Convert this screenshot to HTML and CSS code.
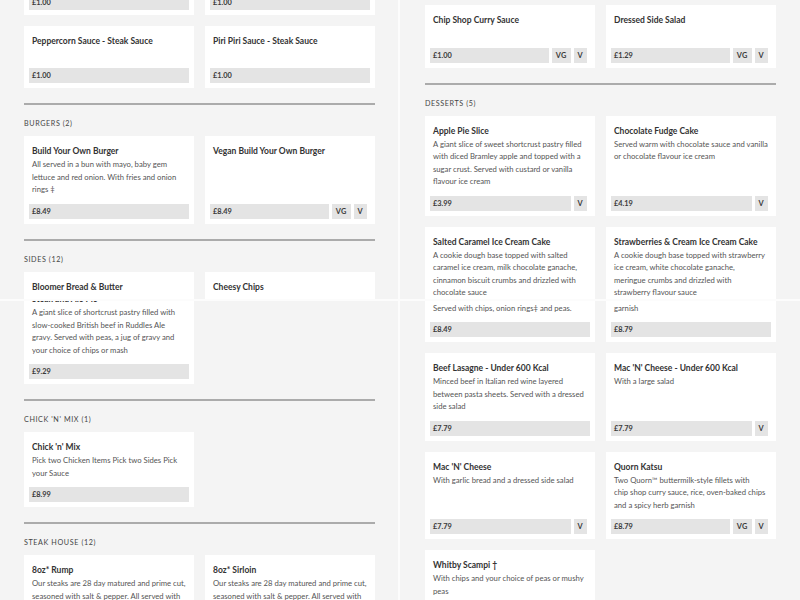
FILE: index.html
```html
<!DOCTYPE html>
<html lang="en">
<head>
<meta charset="UTF-8">
<meta name="viewport" content="width=device-width, initial-scale=1.0">
<title>Menu</title>
<link rel="stylesheet" href="styles.css">
</head>
<body>

<div class="board">

    <!-- top left: end of sauces, burgers, sides -->
    <div class="tile tile-left">
        <div class="cards view-tl">
            <div class="card">
                <h3 class="card-title">Garlic Mayo - Steak Sauce</h3>
                <p class="card-desc"></p>
                <div class="card-foot"><span class="price">£1.00</span></div>
            </div>
            <div class="card">
                <h3 class="card-title">Béarnaise Sauce - Steak Sauce</h3>
                <p class="card-desc"></p>
                <div class="card-foot"><span class="price">£1.00</span></div>
            </div>
        </div>
        <div class="cards row">
            <div class="card">
                <h3 class="card-title">Peppercorn Sauce - Steak Sauce</h3>
                <p class="card-desc"></p>
                <div class="card-foot"><span class="price">£1.00</span></div>
            </div>
            <div class="card">
                <h3 class="card-title">Piri Piri Sauce - Steak Sauce</h3>
                <p class="card-desc"></p>
                <div class="card-foot"><span class="price">£1.00</span></div>
            </div>
        </div>

        <div class="section">
            <h2 class="section-title">Burgers (2)</h2>
            <div class="cards">
                <div class="card">
                    <h3 class="card-title">Build Your Own Burger</h3>
                    <p class="card-desc">All served in a bun with mayo, baby gem<br>lettuce and red onion. With fries and onion<br>rings ‡</p>
                    <div class="card-foot"><span class="price">£8.49</span></div>
                </div>
                <div class="card">
                    <h3 class="card-title">Vegan Build Your Own Burger</h3>
                    <p class="card-desc"></p>
                    <div class="card-foot tagged"><span class="price">£8.49</span><span class="tag">VG</span><span class="tag">V</span></div>
                </div>
            </div>
        </div>

        <div class="section">
            <h2 class="section-title">Sides (12)</h2>
            <div class="cards">
                <div class="card">
                    <h3 class="card-title">Bloomer Bread &amp; Butter</h3>
                    <p class="card-desc"></p>
                    <div class="card-foot"><span class="price">£1.49</span></div>
                </div>
                <div class="card">
                    <h3 class="card-title">Cheesy Chips</h3>
                    <p class="card-desc"></p>
                    <div class="card-foot"><span class="price">£2.99</span></div>
                </div>
            </div>
        </div>
    </div>

    <!-- top right: sides, desserts -->
    <div class="tile tile-right">
        <div class="cards view-tr">
            <div class="card">
                <h3 class="card-title">Chip Shop Curry Sauce</h3>
                <p class="card-desc"></p>
                <div class="card-foot tagged"><span class="price">£1.00</span><span class="tag">VG</span><span class="tag">V</span></div>
            </div>
            <div class="card">
                <h3 class="card-title">Dressed Side Salad</h3>
                <p class="card-desc"></p>
                <div class="card-foot tagged"><span class="price">£1.29</span><span class="tag">VG</span><span class="tag">V</span></div>
            </div>
        </div>

        <div class="section">
            <h2 class="section-title">Desserts (5)</h2>
            <div class="cards">
                <div class="card">
                    <h3 class="card-title">Apple Pie Slice</h3>
                    <p class="card-desc">A giant slice of sweet shortcrust pastry filled<br>with diced Bramley apple and topped with a<br>sugar crust. Served with custard or vanilla<br>flavour ice cream</p>
                    <div class="card-foot tagged"><span class="price">£3.99</span><span class="tag">V</span></div>
                </div>
                <div class="card">
                    <h3 class="card-title">Chocolate Fudge Cake</h3>
                    <p class="card-desc">Served warm with chocolate sauce and vanilla<br>or chocolate flavour ice cream</p>
                    <div class="card-foot tagged"><span class="price">£4.19</span><span class="tag">V</span></div>
                </div>
                <div class="card">
                    <h3 class="card-title">Salted Caramel Ice Cream Cake</h3>
                    <p class="card-desc">A cookie dough base topped with salted<br>caramel ice cream, milk chocolate ganache,<br>cinnamon biscuit crumbs and drizzled with<br>chocolate sauce</p>
                    <div class="card-foot tagged"><span class="price">£4.49</span><span class="tag">V</span></div>
                </div>
                <div class="card">
                    <h3 class="card-title">Strawberries &amp; Cream Ice Cream Cake</h3>
                    <p class="card-desc">A cookie dough base topped with strawberry<br>ice cream, white chocolate ganache,<br>meringue crumbs and drizzled with<br>strawberry flavour sauce</p>
                    <div class="card-foot tagged"><span class="price">£4.49</span><span class="tag">V</span></div>
                </div>
            </div>
        </div>
    </div>

    <!-- bottom left: pies, chick 'n' mix, steak house -->
    <div class="tile tile-left">
        <div class="cards view-bl">
            <div class="card">
                <h3 class="card-title">Steak and Ale Pie</h3>
                <p class="card-desc">A giant slice of shortcrust pastry filled with<br>slow-cooked British beef in Ruddles Ale<br>gravy. Served with peas, a jug of gravy and<br>your choice of chips or mash</p>
                <div class="card-foot"><span class="price">£9.29</span></div>
            </div>
        </div>

        <div class="section">
            <h2 class="section-title">Chick 'n' Mix (1)</h2>
            <div class="cards">
                <div class="card">
                    <h3 class="card-title">Chick 'n' Mix</h3>
                    <p class="card-desc">Pick two Chicken Items Pick two Sides Pick<br>your Sauce</p>
                    <div class="card-foot"><span class="price">£8.99</span></div>
                </div>
            </div>
        </div>

        <div class="section">
            <h2 class="section-title">Steak House (12)</h2>
            <div class="cards">
                <div class="card">
                    <h3 class="card-title">8oz* Rump</h3>
                    <p class="card-desc">Our steaks are 28 day matured and prime cut,<br>seasoned with salt &amp; pepper. All served with<br>chips, peas, grilled tomato and mushroom</p>
                    <div class="card-foot"><span class="price">£12.99</span></div>
                </div>
                <div class="card">
                    <h3 class="card-title">8oz* Sirloin</h3>
                    <p class="card-desc">Our steaks are 28 day matured and prime cut,<br>seasoned with salt &amp; pepper. All served with<br>chips, peas, grilled tomato and mushroom</p>
                    <div class="card-foot"><span class="price">£14.99</span></div>
                </div>
            </div>
        </div>
    </div>

    <!-- bottom right: mains -->
    <div class="tile tile-right">
        <div class="cards view-br">
            <div class="card">
                <h3 class="card-title">Scampi Platter</h3>
                <p class="card-desc">Served with chips, onion rings‡ and peas.</p>
                <div class="card-foot"><span class="price">£8.49</span></div>
            </div>
            <div class="card">
                <h3 class="card-title">Chicken Katsu</h3>
                <p class="card-desc">garnish</p>
                <div class="card-foot"><span class="price">£8.79</span></div>
            </div>
        </div>
        <div class="cards row">
            <div class="card">
                <h3 class="card-title">Beef Lasagne - Under 600 Kcal</h3>
                <p class="card-desc">Minced beef in Italian red wine layered<br>between pasta sheets. Served with a dressed<br>side salad</p>
                <div class="card-foot"><span class="price">£7.79</span></div>
            </div>
            <div class="card">
                <h3 class="card-title">Mac 'N' Cheese - Under 600 Kcal</h3>
                <p class="card-desc">With a large salad</p>
                <div class="card-foot tagged"><span class="price">£7.79</span><span class="tag">V</span></div>
            </div>
            <div class="card">
                <h3 class="card-title">Mac 'N' Cheese</h3>
                <p class="card-desc">With garlic bread and a dressed side salad</p>
                <div class="card-foot tagged"><span class="price">£7.79</span><span class="tag">V</span></div>
            </div>
            <div class="card">
                <h3 class="card-title">Quorn Katsu</h3>
                <p class="card-desc">Two Quorn™ buttermilk-style fillets with<br>chip shop curry sauce, rice, oven-baked chips<br>and a spicy herb garnish</p>
                <div class="card-foot tagged"><span class="price">£8.79</span><span class="tag">VG</span><span class="tag">V</span></div>
            </div>
            <div class="card">
                <h3 class="card-title">Whitby Scampi †</h3>
                <p class="card-desc">With chips and your choice of peas or mushy<br>peas</p>
                <div class="card-foot"><span class="price">£8.99</span></div>
            </div>
        </div>
    </div>

</div>

</body>
</html>
```

FILE: styles.css
```css
body {
    margin: 0;
    padding: 0;
    font-family: Lato, "Open Sans", sans-serif;
    background-color: #fcfcfc;
}
.board {
    width: 800px;
    height: 600px;
    display: grid;
    grid-template-columns: 398px 400px;
    grid-template-rows: 299px 299px;
    gap: 2px;
    background-color: #fcfcfc;
}
.tile {
    background-color: #f4f4f4;
    overflow: hidden;
}
.tile-left {
    padding: 0 23px 0 24px;
}
.tile-right {
    padding: 0 24px 0 25px;
}
.view-tl {
    margin-top: -48px;
}
.view-tr {
    margin-top: 5px;
}
.view-bl {
    margin-top: -17px;
}
.view-br {
    margin-top: -21.5px;
}
.cards {
    display: grid;
    grid-template-columns: 1fr 1fr;
    gap: 11px;
}
.row {
    margin-top: 11px;
}
.card {
    min-width: 0;
    background-color: #fff;
    padding: 9px 5px 5px;
    display: flex;
    flex-direction: column;
}
.card-title {
    margin: 0;
    padding: 0 3px;
    font-size: 8.5px;
    line-height: 13px;
    font-weight: 700;
    color: #333;
    white-space: nowrap;
}
.card-desc {
    flex: 1;
    margin: 0;
    padding: 0 3px;
    min-height: 12.5px;
    font-size: 7.7px;
    line-height: 12.5px;
    color: #555;
    white-space: nowrap;
}
.card-foot {
    display: flex;
    gap: 3px;
    margin-top: 8px;
}
.card-foot.tagged {
    padding-right: 3px;
}
.price,
.tag {
    height: 15px;
    line-height: 15px;
    background-color: #e4e4e4;
    font-size: 7.4px;
    font-weight: 700;
    color: #3a3a3a;
}
.price {
    flex: 1;
    padding: 0 3px;
}
.tag {
    padding: 0 4px;
    letter-spacing: 0.3px;
}
.section {
    margin-top: 15px;
    border-top: 2px solid #ababab;
}
.section-title {
    margin: 13px 0 6px;
    font-size: 7.2px;
    line-height: 12px;
    font-weight: 400;
    letter-spacing: 0.6px;
    text-transform: uppercase;
    color: #444;
}
```
